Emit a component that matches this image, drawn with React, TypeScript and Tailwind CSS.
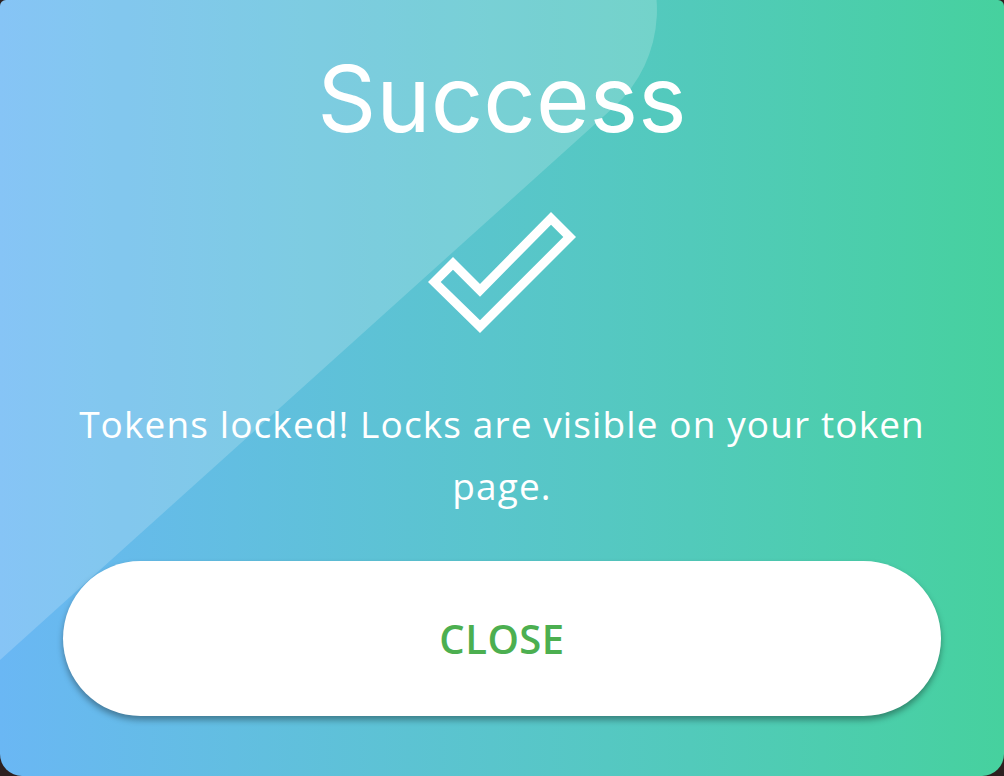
import React from 'react'

// outlined check mark: outer outline and the inset hole, drawn even-odd
const checkPath =
  'M0 70 L25 45 L52 72 L123 0 L148 25 L52 121 Z ' +
  'M12.7 70 L25 57.7 L52 84.7 L123 12.7 L135.3 25 L52 108.3 Z'

const Sheen: React.FC = () => (
  <svg
    className="pointer-events-none absolute inset-0 h-full w-full"
    viewBox="0 0 1004 776"
    preserveAspectRatio="none"
    aria-hidden="true"
  >
    <path
      d="M0 660 L614 107 A131 131 0 0 0 623 -78 L0 -78 Z"
      fill="rgba(255,255,255,0.19)"
    />
  </svg>
)

export default function App() {
  return (
    <div className="h-[776px] w-full bg-[#2d2020]">
      <div className="relative h-[776px] w-full overflow-hidden rounded-t-[6px] rounded-b-[22px] bg-gradient-to-r from-[#6ab7f4] to-[#46d19e]">
        <Sheen />
        <div className="relative flex flex-col items-center px-[63px] pt-[53px] text-white">
          <h1 className="font-['Inter',sans-serif] text-[92px] font-normal leading-none">
            Success
          </h1>

          <svg
            className="mt-[67px] h-[121px] w-[148px]"
            viewBox="0 0 148 121"
            aria-hidden="true"
          >
            <path d={checkPath} fill="#ffffff" fillRule="evenodd" />
          </svg>

          <p className="mt-[60px] text-center font-['Open_Sans',sans-serif] text-[37px] font-normal leading-[62px] tracking-[0.03em]">
            Tokens locked! Locks are visible on your token page.
          </p>

          <button className="mt-[44px] flex h-[155px] w-full items-center justify-center rounded-full bg-white font-['Open_Sans',sans-serif] text-[40px] font-semibold tracking-[0.5px] text-[#4caf50] shadow-[0_4px_6px_rgba(0,0,0,0.35)]">
            CLOSE
          </button>
        </div>
      </div>
    </div>
  )
}
